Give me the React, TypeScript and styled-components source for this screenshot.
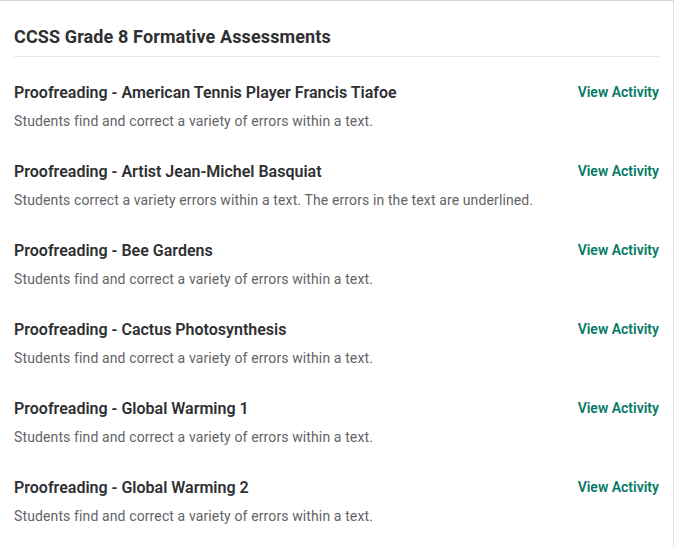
import * as React from 'react';
import styled, { createGlobalStyle } from 'styled-components';

const GlobalStyle = createGlobalStyle`
  body {
    margin: 0;
    background: #fff;
    font-family: Roboto, "Liberation Sans", sans-serif;
  }
`;

const Card = styled.section`
  width: 674px;
  height: 547px;
  box-sizing: border-box;
  border-top: 1px solid #d4d4d4;
  border-right: 1px solid #e2e2e2;
  padding: 0 14px 0 14px;
  background: #fff;
  overflow: hidden;
`;

const Header = styled.h2`
  margin: 0;
  padding: 24px 0 7px;
  font-size: 18px;
  line-height: 24px;
  font-weight: 700;
  letter-spacing: 0.12px;
  color: #2f2f33;
  border-bottom: 1px solid #e6e6e6;
`;

const List = styled.ul`
  list-style: none;
  margin: 0;
  padding: 0;
`;

const Item = styled.li`
  display: flex;
  justify-content: space-between;
  align-items: flex-start;
  padding: 25px 0 5px;
`;

const Info = styled.div`
  display: flex;
  flex-direction: column;
  gap: 7px;
`;

const Name = styled.h3`
  margin: 0;
  font-size: 16px;
  line-height: 22px;
  font-weight: 600;
  color: #2f2f33;
`;

const Description = styled.p`
  margin: 0;
  font-size: 14px;
  line-height: 20px;
  letter-spacing: 0.12px;
  color: #636368;
`;

const ViewLink = styled.a`
  font-size: 14px;
  line-height: 20px;
  font-weight: 600;
  color: #067a66;
  text-decoration: none;
  white-space: nowrap;
  cursor: pointer;
`;

const activities = [
  {
    name: 'Proofreading - American Tennis Player Francis Tiafoe',
    description: 'Students find and correct a variety of errors within a text.',
  },
  {
    name: 'Proofreading - Artist Jean-Michel Basquiat',
    description:
      'Students correct a variety errors within a text. The errors in the text are underlined.',
  },
  {
    name: 'Proofreading - Bee Gardens',
    description: 'Students find and correct a variety of errors within a text.',
  },
  {
    name: 'Proofreading - Cactus Photosynthesis',
    description: 'Students find and correct a variety of errors within a text.',
  },
  {
    name: 'Proofreading - Global Warming 1',
    description: 'Students find and correct a variety of errors within a text.',
  },
  {
    name: 'Proofreading - Global Warming 2',
    description: 'Students find and correct a variety of errors within a text.',
  },
];

export default function App() {
  return (
    <>
      <GlobalStyle />
      <Card>
        <Header>CCSS Grade 8 Formative Assessments</Header>
        <List>
          {activities.map(a => (
            <Item key={a.name}>
              <Info>
                <Name>{a.name}</Name>
                <Description>{a.description}</Description>
              </Info>
              <ViewLink>View Activity</ViewLink>
            </Item>
          ))}
        </List>
      </Card>
    </>
  );
}
